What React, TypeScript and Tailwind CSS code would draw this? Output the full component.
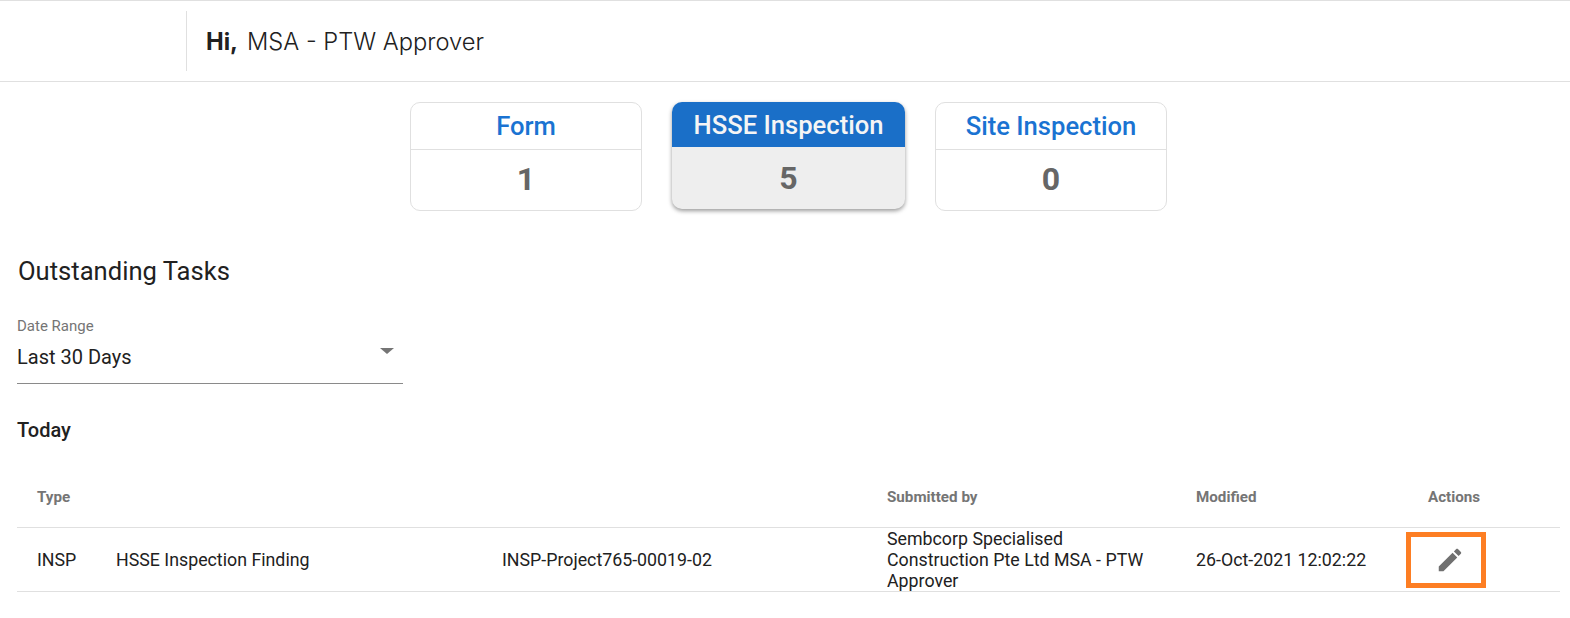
const cards = [
  { title: "Form", count: 1, width: "w-[232px]" },
  { title: "HSSE Inspection", count: 5, width: "w-[233px]", active: true },
  { title: "Site Inspection", count: 0, width: "w-[232px]" },
]

function SummaryCard({ title, count, width, active }: { title: string; count: number; width: string; active?: boolean }) {
  if (active) {
    return (
      <div className={`${width} h-[107px] overflow-hidden rounded-[10px] bg-[#eeeeee] shadow-[0_2px_4px_rgba(0,0,0,0.4)]`}>
        <div className="flex h-[45px] items-center justify-center bg-[#1a6fc8] pt-[1px] text-[25.6px] font-medium text-[#f5f5f5]">{title}</div>
        <div className="flex h-[62px] items-center justify-center text-[32px] font-bold text-[#666666]">{count}</div>
      </div>
    )
  }
  return (
    <div className={`${width} h-[109px] overflow-hidden rounded-[10px] border border-[#e0e0e0] bg-white`}>
      <div className="flex h-[47px] items-center justify-center border-b border-[#e0e0e0] text-[25.6px] font-medium text-[#1a73d2]">{title}</div>
      <div className="flex h-[60px] items-center justify-center pb-[2px] text-[32px] font-bold text-[#666666]">{count}</div>
    </div>
  )
}

export default function App() {
  return (
    <div className="min-h-[618px] bg-white font-['Roboto',sans-serif] text-[#212121]">
      <header className="flex h-[82px] items-center border-y border-[#e0e0e0] pl-[186px]">
        <div className="flex h-[60px] items-center border-l border-[#e0e0e0] pt-[2px] pl-[19px] text-[23.7px] font-['Inter',sans-serif]">
          <span className="font-bold">Hi,</span>
          <span className="ml-[9px] font-light">MSA - PTW Approver</span>
        </div>
      </header>

      <section className="flex justify-center gap-[30px] pt-5 pl-[7px]">
        {cards.map((c) => (
          <SummaryCard key={c.title} {...c} />
        ))}
      </section>

      <main className="px-[12px] pt-[44px]">
        <h2 className="pl-[6px] text-[25.6px] leading-[32px]">Outstanding Tasks</h2>

        <div className="mt-[30px] ml-[5px] w-[386px] border-b border-[#8a8a8a] pb-[14px]">
          <div className="text-[15px] leading-[18px] text-[#757575]">Date Range</div>
          <div className="mt-[10px] flex items-start justify-between pr-[9px]">
            <span className="text-[20px] leading-[24px]">Last 30 Days</span>
            <span className="mt-[3px] h-0 w-0 border-x-[7px] border-t-[6px] border-x-transparent border-t-[#757575]" />
          </div>
        </div>

        <h3 className="mt-[33px] pl-[5px] text-[20px] leading-[26px] font-medium">Today</h3>

        <table className="mt-[24px] ml-[5px] w-[1543px] table-fixed border-collapse text-[17.8px]">
          <colgroup>
            <col className="w-[99px]" />
            <col className="w-[386px]" />
            <col className="w-[385px]" />
            <col className="w-[309px]" />
            <col className="w-[232px]" />
            <col />
          </colgroup>
          <thead>
            <tr className="h-[60px] border-b border-[#e0e0e0] text-left text-[15.2px] text-[#757575]">
              <th className="pt-[1px] pl-[20px] font-bold" colSpan={2}>Type</th>
              <th />
              <th className="pt-[1px] font-bold">Submitted by</th>
              <th className="pt-[1px] font-bold">Modified</th>
              <th className="pt-[1px] font-bold">Actions</th>
            </tr>
          </thead>
          <tbody>
            <tr className="h-[63px] border-b border-[#e0e0e0]">
              <td className="pt-[3px] pl-[20px]">INSP</td>
              <td className="pt-[3px]">HSSE Inspection Finding</td>
              <td className="pt-[3px]">INSP-Project765-00019-02</td>
              <td className="leading-[21px]">
                <div className="w-[260px]">Sembcorp Specialised Construction Pte Ltd MSA - PTW Approver</div>
              </td>
              <td className="pt-[3px]">26-Oct-2021 12:02:22</td>
              <td>
                <div className="relative top-[1px] -left-[22px] flex h-[56px] w-[80px] items-center justify-center border-[5px] border-[#fd7e23]">
                  <svg viewBox="0 0 24 24" className="ml-[8px] h-[30px] w-[30px] fill-[#707070]">
                    <path d="M3 17.25V21h3.75L17.81 9.94l-3.75-3.75L3 17.25zM20.71 7.04c.39-.39.39-1.02 0-1.41l-2.34-2.34c-.39-.39-1.02-.39-1.41 0l-1.83 1.83 3.75 3.75 1.83-1.83z" />
                  </svg>
                </div>
              </td>
            </tr>
          </tbody>
        </table>
      </main>
    </div>
  )
}
